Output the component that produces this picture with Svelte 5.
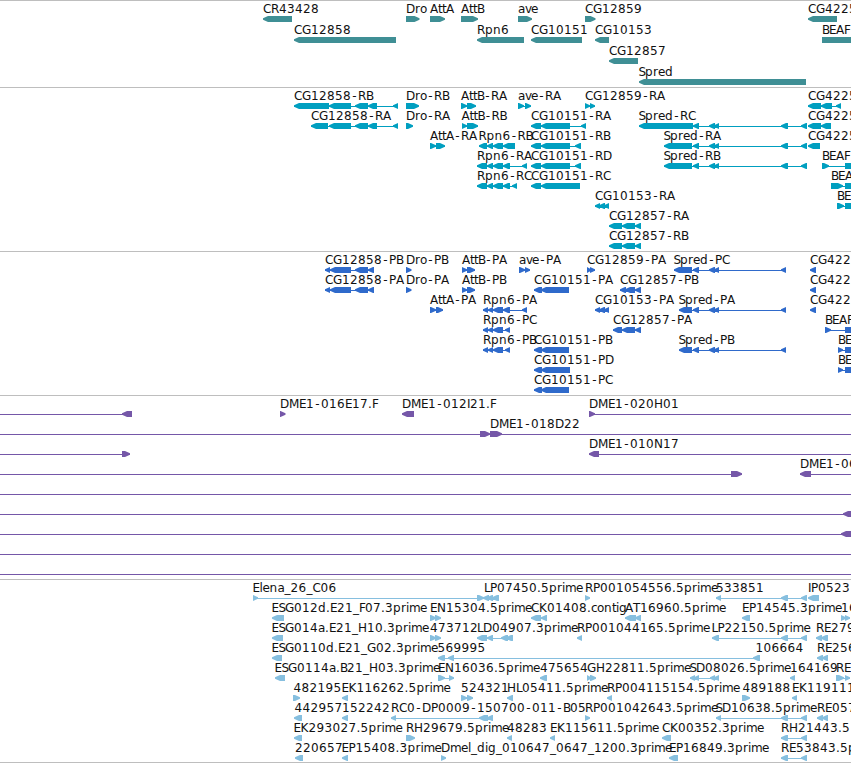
<script lang="ts">
	type Strand = '<' | '>';
	// label, label x, strand, flat list of block start/end pairs
	type Feature = [string, number, Strand, number[]];
	type Track = { name: string; color: string; pitch: number; height: number; rows: Feature[][] };

	const WIDTH = 851;

	// Label advances in px, digits and anything unlisted take 8
	const ADVANCE: Record<string, number> = {
		B: 7, D: 9, E: 7, F: 6, G: 9, H: 9, I: 3, L: 6, M: 10, N: 9, P: 7, S: 6.5, T: 7,
		a: 7, c: 6, e: 7, i: 3, l: 3, m: 11, o: 7, r: 5, t: 4, v: 6,
		'-': 7, '_': 6, '.': 4
	};

	const cg12858 = [355, 368, 368, 377, 393, 398];
	const spredTail = [693, 699, 709, 715, 714, 719, 781, 788, 801, 807];
	const spredCds = [693, 699, 709, 715, 714, 719, 781, 786];
	const est3 = [781, 788, 801, 807];

	const tracks: Track[] = [
		{
			name: 'Gene', color: '#3f8f95', pitch: 21, height: 87,
			rows: [
				[
					['CR43428', 263, '<', [263, 292]],
					['Dro', 406, '>', [406, 419.5]],
					['AttA', 430, '>', [430, 445]],
					['AttB', 461, '>', [461, 478]],
					['ave', 518, '>', [518, 532]],
					['CG12859', 585, '>', [585, 595.5]],
					['CG4225', 808, '<', [808, 837]]
				],
				[
					['CG12858', 294, '<', [294, 396]],
					['Rpn6', 477, '<', [477, 524]],
					['CG10151', 531, '<', [531, 582]],
					['CG10153', 595, '<', [595, 609]],
					['BEAF', 822, '>', [822, 870]]
				],
				[['CG12857', 609, '<', [609, 638]]],
				[['Spred', 638.5, '<', [639, 806]]]
			]
		},
		{
			name: 'Transcript', color: '#009fc0', pitch: 20, height: 164,
			rows: [
				[
					['CG12858-RB', 294, '<', [294, 329, 329, 351, ...cg12858]],
					['Dro-RB', 406, '>', [406, 419]],
					['AttB-RA', 461, '>', [461, 467, 467, 476]],
					['ave-RA', 518, '>', [518, 524, 525, 531]],
					['CG12859-RA', 585, '>', [585, 590, 590, 595]],
					['CG4225', 808, '<', [808, 821, 821, 832, 836, 841]]
				],
				[
					['CG12858-RA', 311, '<', [311, 328, 329, 351, ...cg12858]],
					['Dro-RA', 406, '>', [406, 413]],
					['AttB-RB', 461.5, '>', [462, 467, 467, 478]],
					['CG10151-RA', 531, '<', [531, 541, 541, 570, 581, 586]],
					['Spred-RC', 638.5, '<', [639, 693, ...spredTail]],
					['CG4225', 808, '<', [808, 821, 821, 831]]
				],
				[
					['AttA-RA', 430, '>', [430, 436, 436, 445]],
					['Rpn6-RB', 478.5, '<', [479, 487, 487, 493, 493, 503, 503, 515]],
					['CG10151-RB', 531, '<', [531, 541, 541, 570, 575, 581]],
					['Spred-RA', 663.5, '<', [664, 692, ...spredTail]],
					['CG4225', 808, '<', [808, 820]]
				],
				[
					['Rpn6-RA', 477, '<', [477, 487, 487, 493, 493, 503, 503, 510, 522, 527]],
					['CG10151-RD', 531, '<', [531, 541, 541, 570, 575, 581]],
					['Spred-RB', 663.5, '<', [664, 692, ...spredTail]],
					['BEAF', 822, '>', [822, 829, 845, 860]]
				],
				[
					['Rpn6-RC', 477, '<', [477, 487, 487, 493, 493, 503, 503, 510, 512, 517]],
					['CG10151-RC', 531, '<', [531, 541, 541, 580]],
					['BEA', 831, '>', [831, 843, 845, 860]]
				],
				[
					['CG10153-RA', 595, '<', [595, 600, 599, 605, 604, 609]],
					['BE', 837, '>', [837, 844, 845, 860]]
				],
				[['CG12857-RA', 609, '<', [609, 622, 622, 635, 635, 641]]],
				[['CG12857-RB', 609, '<', [609, 622, 622, 635, 635, 641]]]
			]
		},
		{
			name: 'CDS', color: '#2f6acb', pitch: 20, height: 144,
			rows: [
				[
					['CG12858-PB', 325, '<', [325, 330, 330, 351, 355, 368, 368, 374]],
					['Dro-PB', 406, '>', [406, 411.5]],
					['AttB-PA', 462, '>', [462, 467, 467, 475]],
					['ave-PA', 519, '>', [519, 525, 525, 530]],
					['CG12859-PA', 587, '>', [587, 591, 590, 595]],
					['Spred-PC', 673.5, '<', [674, 692, ...spredCds]],
					['CG422', 810, '<', [810, 816]]
				],
				[
					['CG12858-PA', 325, '<', [325, 330, 330, 351, 355, 368, 368, 374]],
					['Dro-PA', 406, '>', [406, 411.5]],
					['AttB-PB', 462, '>', [462, 467, 467, 475]],
					['CG10151-PA', 534, '<', [534, 542, 541, 569]],
					['CG12857-PB', 620, '<', [620, 626, 625, 635, 635, 641]],
					['CG422', 810, '<', [810, 816]]
				],
				[
					['AttA-PA', 430, '>', [430, 436, 436, 443]],
					['Rpn6-PA', 483, '<', [483, 488, 488, 493, 493, 503, 503, 510, 522, 527]],
					['CG10153-PA', 595, '<', [595, 600, 599, 605, 604, 609]],
					['Spred-PA', 678.5, '<', [679, 692, ...spredCds]],
					['CG422', 810, '<', [810, 816]]
				],
				[
					['Rpn6-PC', 483, '<', [483, 488, 488, 493, 493, 503, 505, 510]],
					['CG12857-PA', 613, '<', [613, 622, 622, 635, 635, 641]],
					['BEAF', 825, '>', [825, 831, 845, 860]]
				],
				[
					['Rpn6-PB', 483, '<', [483, 488, 488, 493, 493, 503, 505, 510]],
					['CG10151-PB', 534, '<', [534, 542, 541, 569]],
					['Spred-PB', 678.5, '<', [679, 692, ...spredCds]],
					['BE', 838, '>', [838, 843, 845, 860]]
				],
				[
					['CG10151-PD', 534, '<', [534, 542, 541, 570]],
					['BE', 838, '>', [838, 843, 845, 860]]
				],
				[['CG10151-PC', 534, '<', [534, 542, 541, 569]]]
			]
		},
		{
			name: 'BAC', color: '#7557a8', pitch: 20, height: 184,
			rows: [
				[
					['', 0, '<', [-20, -10, 122, 132]],
					['DME1-016E17.F', 280, '>', [280, 285.5]],
					['DME1-012I21.F', 402, '<', [402, 414]],
					['DME1-020H01', 589, '>', [589, 595, 870, 880]]
				],
				[
					['', 0, '>', [-20, -10, 480, 490]],
					['DME1-018D22', 490, '>', [490, 502, 870, 880]]
				],
				[
					['', 0, '>', [-20, -10, 122, 130]],
					['DME1-010N17', 589, '<', [589, 599, 870, 880]]
				],
				[
					['', 0, '>', [-20, -10, 731, 742]],
					['DME1-06', 800, '<', [800, 811, 870, 880]]
				],
				[['', 0, '>', [-20, -10, 870, 880]]],
				[['', 0, '<', [-20, -10, 843, 860]]],
				[['', 0, '<', [-20, -10, 841, 860]]],
				[['', 0, '>', [-20, -10, 870, 880]]],
				[['', 0, '>', [-20, -10, 870, 880]]]
			]
		},
		{
			name: 'EST', color: '#86bfdf', pitch: 20, height: 183,
			rows: [
				[
					['Elena_26_C06', 252.5, '>', [253, 258, 477, 484]],
					['LP07450.5prime', 484, '<', [483, 489, 487, 493, 492, 499]],
					['RP001054556.5prime', 585, '>', [585, 590]],
					['533851', 716, '<', [716, 721, ...est3]],
					['IP0523', 808, '<', [808, 819]]
				],
				[
					['ESG012d.E21_F07.3prime', 271.5, '<', [272, 284]],
					['EN15304.5prime', 430, '>', [430, 436, 435, 441]],
					['CK01408.contig', 531, '<', [531, 541, 541, 547]],
					['AT16960.5prime', 625, '<', [625, 636, 635, 641]],
					['EP14545.3prime', 742, '<', [742, 750]],
					['16', 841, '>', [841, 846, 845, 850]]
				],
				[
					['ESG014a.E21_H10.3prime', 271.5, '<', [272, 283]],
					['473712', 430, '>', [430, 436, 435, 441]],
					['LD04907.3prime', 477, '<', [477, 487, 487, 493, 501, 508, 506, 513]],
					['RP001044165.5prime', 577, '<', [577, 582]],
					['LP22150.5prime', 711.5, '<', [712, 719, ...est3]],
					['RE279', 816, '<', [816, 822, 821, 828]]
				],
				[
					['ESG0110d.E21_G02.3prime', 271.5, '<', [272, 282]],
					['569995', 437.5, '<', [438, 445, 448, 454, 753, 760]],
					['106664', 755.5, '<', []],
					['RE256', 817, '<', [817, 823, 822, 828]]
				],
				[
					['ESG0114a.B21_H03.3prime', 274.5, '<', [275, 285]],
					['EN16036.5prime', 438, '>', [438, 445, 449, 454]],
					['475654', 540, '<', [540, 547]],
					['GH22811.5prime', 587, '>', [587, 591, 590, 596]],
					['SD08026.5prime', 689.5, '<', [690, 695, 694, 699, 710, 715, 714, 719]],
					['164169', 790, '<', [790, 795]],
					['RE', 836, '>', [836, 844, 845, 850]]
				],
				[
					['482195', 293.5, '>', [293, 300]],
					['EK116262.5prime', 341.5, '<', [342, 348]],
					['524321', 461, '>', [461, 467, 467, 473]],
					['HL05411.5prime', 507, '<', [507, 513]],
					['RP004115154.5prime', 607, '<', [607, 612]],
					['489188', 742.5, '>', [742, 750]],
					['EK119111', 792, '<', [792, 797]]
				],
				[
					['442957', 294.5, '<', [294, 302]],
					['152242', 342, '<', [342, 348]],
					['RC0-DP0009-150700-011-B05', 391, '<', [391, 396, 479, 488, 487, 493]],
					['RP001042643.5prime', 585, '>', [585, 590]],
					['SD10638.5prime', 715.5, '<', [716, 721, ...est3]],
					['RE057', 817, '<', [817, 823, 822, 828]]
				],
				[
					['EK293027.5prime', 293.5, '<', [294, 302]],
					['RH29679.5prime', 406, '>', [406, 415]],
					['48283', 507, '<', [507, 512]],
					['EK115611.5prime', 550, '<', [550, 555]],
					['CK00352.3prime', 662, '<', [662, 671]],
					['RH21443.5', 781, '<', est3]
				],
				[
					['220657', 295, '<', [295, 303]],
					['EP15408.3prime', 341.5, '<', [342, 348]],
					['Dmel_dig_010647_0647_1200.3prime', 441, '>', [441, 446]],
					['EP16849.3prime', 669, '<', [669, 678]],
					['RE53843.5p', 781, '<', est3]
				]
			]
		}
	];

	function glyphX(label: string, x: number) {
		const xs: number[] = [];
		for (const ch of label) {
			// the hyphen is narrower than its slot, so centre it
			xs.push(ch === '-' ? x + 1.3 : x);
			x += ADVANCE[ch] ?? 8;
		}
		return xs.join(' ');
	}

	// Block with a tapered end pointing along the strand
	function blocks(pos: number[], strand: Strand, y: number) {
		let d = '';
		for (let i = 0; i < pos.length; i += 2) {
			const a = pos[i];
			const b = pos[i + 1];
			const taper = Math.min(5, b - a);
			d += strand === '<'
				? `M${b} ${y}H${a + taper}L${a} ${y + 2.2}v1.6L${a + taper} ${y + 6}H${b}Z`
				: `M${a} ${y}H${b - taper}L${b} ${y + 2.2}v1.6L${b - taper} ${y + 6}H${a}Z`;
		}
		return d;
	}
</script>

<main class="browser">
	{#each tracks as track}
		<section class="track" aria-label={track.name}>
			<svg width={WIDTH} height={track.height - 1} fill={track.color}>
				{#each track.rows as row, r}
					{#each row as [label, x, strand, pos]}
						{@const y = r * track.pitch + 15}
						{#if pos.length > 2}
							<rect x={pos[0]} y={y + 3} width={pos[pos.length - 1] - pos[0]} height="1" />
						{/if}
						<path d={blocks(pos, strand, y)} />
						{#if label}
							<text x={glyphX(label, x)} y={y - 3}>{label}</text>
						{/if}
					{/each}
				{/each}
			</svg>
		</section>
	{/each}
</main>

<style>
	:global(body) {
		margin: 0;
		background: #fff;
	}

	.browser {
		display: flex;
		flex-direction: column;
		width: 851px;
		overflow: hidden;
		border-bottom: 1px solid #bebebe;
	}

	.track {
		border-top: 1px solid #bebebe;
	}

	svg {
		display: block;
		overflow: hidden;
	}

	text {
		font-family: 'DejaVu Sans', sans-serif;
		font-size: 12px;
		fill: #111;
	}
</style>
